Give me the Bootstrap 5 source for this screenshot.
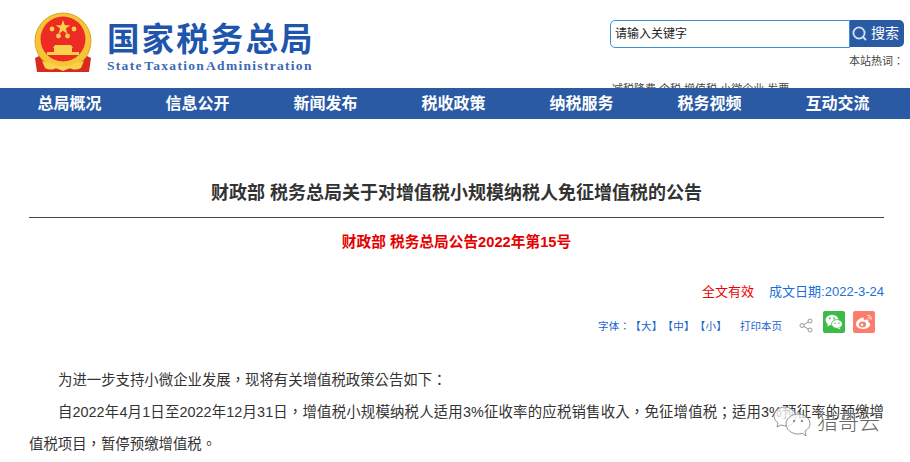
<!DOCTYPE html>
<html lang="zh-CN">
<head>
  <meta charset="UTF-8">
  <meta name="viewport" content="width=device-width, initial-scale=1.0">
  <title>财政部 税务总局关于对增值税小规模纳税人免征增值税的公告</title>
  <link href="https://cdn.jsdelivr.net/npm/bootstrap@5.3.2/dist/css/bootstrap.min.css" rel="stylesheet">
  <style>
    html, body { height: 462px; overflow: hidden; }
    body {
      font-family: "Liberation Sans", "Noto Sans CJK SC", sans-serif;
      color: #333;
      background: #fff;
      position: relative;
      text-spacing-trim: space-all;
    }
    .tc-text { font-family: "Liberation Sans", "Noto Sans CJK TC", sans-serif; }
    .top-head { height: 88px; padding-left: 34px; }
    .emblem { width: 58px; height: 62px; margin-top: 12px; flex: none; }
    .brand { margin-left: 15px; margin-top: 21px; color: #1f56ad; }
    .brand-cn { font-size: 32.5px; line-height: 38px; font-weight: 700; letter-spacing: 2.1px; white-space: nowrap; }
    .brand-en { font-family: "Liberation Serif", serif; font-size: 13.5px; line-height: 14px; font-weight: 700; letter-spacing: 1.3px; word-spacing: -3px; color: #3c68b5; white-space: nowrap; }
    .search-side { width: 294px; margin-left: auto; margin-right: 6px; padding-top: 20px; font-size: 11px; }
    .search-input { width: 240px; height: 28px; border: 1px solid #3a8fd8; border-radius: 5px 0 0 5px; padding: 0 4px; font-size: 12px; line-height: 26px; color: #222; }
    .search-btn { width: 54px; height: 27px; background: #2a5aa4; color: #fff; border-radius: 0 5px 5px 0; font-size: 14px; padding-right: 3px; }
    .hot-label { text-align: right; margin-top: 5px; line-height: 16px; color: #444; }
    .hot-words { margin-top: 12px; line-height: 16px; padding-left: 2px; color: #444; white-space: nowrap; }
    .main-nav { height: 31px; background: #2a5aa4; padding-left: 5.5px; position: relative; }
    .main-nav a { width: 128px; text-align: center; color: #fff; font-size: 16px; font-weight: 700; line-height: 31px; text-decoration: none; }
    .article { padding: 0 26px 0 29px; }
    .art-title { font-size: 18px; font-weight: 700; line-height: 26px; text-align: center; color: #333; margin: 0; padding: 61px 0 11px; border-bottom: 1px solid #444; }
    .art-no { font-size: 14.7px; font-weight: 700; line-height: 20px; color: #e60000; text-align: center; margin: 14px 0 0; }
    .meta-line { margin-top: 30px; line-height: 20px; font-size: 13px; color: #1a6fd8; }
    .meta-valid { color: #f00000; margin-right: 15px; }
    .tool-line { margin-top: 9px; height: 22px; font-size: 10.5px; color: #1a62cc; padding-right: 9px; }
    .tool-line span { white-space: nowrap; margin-top: 8px; }
    .font-sizes { letter-spacing: .25px; margin-right: 13px; }
    .share-ico { width: 14px; height: 15px; margin-left: 17px; margin-top: 7px; }
    .social-ico { width: 22px; height: 22px; border-radius: 2px; margin-left: 8px; }
    .social-ico.wx { background: #3dbb48; margin-left: 10px; }
    .social-ico.wb { background: #fb7d6c; }
    .art-body { margin-top: 31px; font-size: 14.4px; line-height: 32px; color: #333; }
    .art-body p { margin: 0; text-indent: 29px; text-align: justify; }
    .watermark { position: absolute; left: 773px; top: 405px; color: #666; font-size: 21px; font-weight: 300; line-height: 30px; text-shadow: 0 0 1px #fff; }
  </style>
</head>
<body>
  <header class="top-head d-flex">
    <svg class="emblem" viewBox="0 0 58 62">
      <path d="M7 43 L1 46 L3 60 L20 60 L38 60 L55 60 L57 46 L51 43 L29 52Z" fill="#d92a22"/>
      <circle cx="29" cy="29" r="28" fill="#f5c437"/>
      <circle cx="29" cy="29" r="28" fill="none" stroke="#e0a21f" stroke-width="1"/>
      <circle cx="29" cy="27" r="22.5" fill="#ee2a24"/>
      <polygon points="29,8 30.8,13.2 36.3,13.3 31.9,16.6 33.5,21.9 29,18.8 24.5,21.9 26.1,16.6 21.7,13.3 27.2,13.2" fill="#f7d24a"/>
      <g fill="#f7d24a">
        <circle cx="18" cy="17" r="2.4"/><circle cx="40" cy="17" r="2.4"/>
        <circle cx="24.5" cy="24" r="2.4"/><circle cx="33.5" cy="24" r="2.4"/>
        <path d="M21 33h16l2 3h-20z"/>
        <rect x="20" y="36" width="18" height="4"/>
        <path d="M13 40h32v3h-32z"/>
        <path d="M8 49c6 3 10 1 14 0l7 3 7-3c4 1 8 3 14 0l-3 7c-4 2-8 2-11 0l-7 3-7-3c-3 2-7 2-11 0z"/>
      </g>
      <path d="M12 45 A24 24 0 0 0 46 45" fill="none" stroke="#f5c437" stroke-width="4"/>
    </svg>
    <div class="brand">
      <div class="brand-cn">国家税务总局</div>
      <div class="brand-en">State Taxation Administration</div>
    </div>
    <div class="search-side">
      <div class="d-flex align-items-start">
        <div class="search-input">请输入关键字</div>
        <div class="search-btn d-flex align-items-center justify-content-center gap-1">
          <svg width="15" height="15" viewBox="0 0 15 15"><circle cx="7" cy="7" r="5.6" fill="none" stroke="#d5e2f2" stroke-width="1.8"/><path d="M11 11l3 3" stroke="#d5e2f2" stroke-width="1.8"/></svg>
          <span>搜索</span>
        </div>
      </div>
      <div class="hot-label tc-text" lang="zh-TW"><span lang="zh-CN">本站热词</span>：</div>
      <div class="hot-words">减税降费 个税 增值税 小微企业 发票</div>
    </div>
  </header>

  <nav class="main-nav d-flex">
    <a href="#">总局概况</a>
    <a href="#">信息公开</a>
    <a href="#">新闻发布</a>
    <a href="#">税收政策</a>
    <a href="#">纳税服务</a>
    <a href="#">税务视频</a>
    <a href="#">互动交流</a>
  </nav>

  <main class="article">
    <h1 class="art-title">财政部 税务总局关于对增值税小规模纳税人免征增值税的公告</h1>
    <p class="art-no">财政部 税务总局公告2022年第15号</p>
    <div class="meta-line d-flex justify-content-end">
      <span class="meta-valid">全文有效</span>
      <span>成文日期:2022-3-24</span>
    </div>
    <div class="tool-line d-flex justify-content-end align-items-start">
      <span class="tc-text font-sizes" lang="zh-TW">字体：【大】【中】【小】</span>
      <span>打印本页</span>
      <svg class="share-ico" viewBox="0 0 14 15" fill="none" stroke="#999" stroke-width="1">
        <circle cx="3" cy="7.5" r="2"/><circle cx="11" cy="3" r="2"/><circle cx="11" cy="12" r="2"/>
        <path d="M4.8 6.5l4.500-2.600M4.800 8.500l4.500 2.600"/>
      </svg>
      <div class="social-ico wx d-flex align-items-center justify-content-center">
        <svg width="18" height="16" viewBox="0 0 18 16">
          <ellipse cx="7" cy="6" rx="6.5" ry="5.3" fill="#fff"/>
          <path d="M3 9.5l-.8 3 3-1.6z" fill="#fff"/>
          <ellipse cx="12" cy="10" rx="5.4" ry="4.4" fill="#fff" stroke="#3dbb48" stroke-width=".8"/>
          <path d="M14.5 13.5l1.2 2-3-1.2z" fill="#fff"/>
          <circle cx="5" cy="4.5" r=".9" fill="#3dbb48"/><circle cx="9" cy="4.5" r=".9" fill="#3dbb48"/>
          <circle cx="10.2" cy="9.2" r=".7" fill="#3dbb48"/><circle cx="13.8" cy="9.2" r=".7" fill="#3dbb48"/>
        </svg>
      </div>
      <div class="social-ico wb d-flex align-items-center justify-content-center">
        <svg width="18" height="16" viewBox="0 0 18 16">
          <path d="M7.500 3.600c-3.400.9-6.500 3.900-6.500 6.700 0 2.700 3.200 4.700 7 4.700 4.300 0 7.200-2.400 7.200-4.500 0-1.500-1.300-2.100-2.100-2.400.5-1.100.5-2.500-1.400-2.700-1 0-2.200.4-2.900.8.200-1.600-.2-3.100-1.300-2.600z" fill="#fff"/>
          <ellipse cx="7.500" cy="10.500" rx="3.600" ry="2.900" fill="#fb7d6c"/>
          <circle cx="7" cy="10.700" r="1.300" fill="#fff"/>
          <path d="M12.500 1.500c2.200-.3 4 1.500 3.700 4M12.800 3.700c1-.2 1.700.6 1.500 1.600" fill="none" stroke="#fff" stroke-width="1"/>
        </svg>
      </div>
    </div>
    <div class="art-body tc-text" lang="zh-TW">
      <p>为进一步支持小微企业发展，现将有关增值税政策公告如下：</p>
      <p>自2022年4月1日至2022年12月31日，增值税小规模纳税人适用3%征收率的应税销售收入，免征增值税；适用3%预征率的预缴增值税项目，暂停预缴增值税。</p>
    </div>
  </main>

  <div class="watermark d-flex align-items-center gap-1">
    <svg width="40" height="34" viewBox="0 0 40 34" fill="rgba(255,255,255,.75)" stroke="#777" stroke-width=".8">
      <path d="M12 2c-6 0-11 4-11 9 0 3 2 5 4 7l-1 4 4-2c1 0 3 1 5 1 5 0 10-4 10-9s-5-10-11-10z"/>
      <path d="M25 9c-7 0-12 5-12 10s5 10 12 10c1 0 3 0 4-1l4 3-1-5c3-2 5-4 5-7 0-5-5-10-12-10z"/>
      <circle cx="21" cy="16" r=".8" fill="#777"/><circle cx="29" cy="16" r=".8" fill="#777"/>
    </svg>
    <span>猎哥云</span>
  </div>

  <script src="https://cdn.jsdelivr.net/npm/bootstrap@5.3.2/dist/js/bootstrap.bundle.min.js"></script>
</body>
</html>
